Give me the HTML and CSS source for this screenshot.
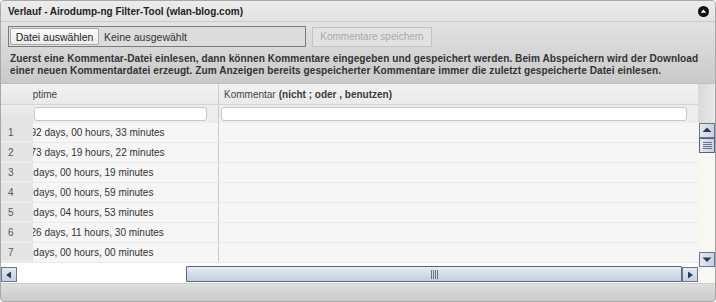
FILE: index.html
```html
<!DOCTYPE html>
<html lang="de">
<head>
<meta charset="utf-8">
<title>Verlauf</title>
<link rel="stylesheet" href="styles.css">
</head>
<body>
<div class="dialog">
  <div class="titlebar">
    <span class="title">Verlauf - Airodump-ng Filter-Tool (wlan-blog.com)</span>
    <svg class="collapse" width="11" height="11" viewBox="0 0 11 11"><circle cx="5.5" cy="5.5" r="5.5" fill="#111"/><path d="M2.6 6.8 L5.5 3.6 L8.4 6.8 Z" fill="#fff"/></svg>
  </div>
  <div class="content">
    <div class="toolbar">
      <div class="file">
        <span class="file-btn">Datei auswählen</span>
        <span class="file-name">Keine ausgewählt</span>
      </div>
      <span class="save-btn">Kommentare speichern</span>
    </div>
    <p class="desc">Zuerst eine Kommentar-Datei einlesen, dann können Kommentare eingegeben und gespeichert werden. Beim Abspeichern wird der Download einer neuen Kommentardatei erzeugt. Zum Anzeigen bereits gespeicherter Kommentare immer die zuletzt gespeicherte Datei einlesen.</p>
  </div>
  <div class="grid">
    <div class="grid-main">
      <div class="row hdr">
        <div class="c-num"></div>
        <div class="c-up"><span class="shift s-hdr">Uptime</span></div>
        <div class="c-kom">Kommentar <b>(nicht ; oder , benutzen)</b></div>
      </div>
      <div class="row filter">
        <div class="c-num"></div>
        <div class="c-up"><span class="inp inp-up"></span></div>
        <div class="c-kom"><span class="inp inp-kom"></span></div>
      </div>
      <div class="row data"><div class="c-num">1</div><div class="c-up"><span class="shift s1">192 days, 00 hours, 33 minutes</span></div><div class="c-kom"></div></div>
      <div class="row data"><div class="c-num">2</div><div class="c-up"><span class="shift s1">173 days, 19 hours, 22 minutes</span></div><div class="c-kom"></div></div>
      <div class="row data"><div class="c-num">3</div><div class="c-up"><span class="shift s0">0 days, 00 hours, 19 minutes</span></div><div class="c-kom"></div></div>
      <div class="row data"><div class="c-num">4</div><div class="c-up"><span class="shift s0">0 days, 00 hours, 59 minutes</span></div><div class="c-kom"></div></div>
      <div class="row data"><div class="c-num">5</div><div class="c-up"><span class="shift s0">0 days, 04 hours, 53 minutes</span></div><div class="c-kom"></div></div>
      <div class="row data"><div class="c-num">6</div><div class="c-up"><span class="shift s1">126 days, 11 hours, 30 minutes</span></div><div class="c-kom"></div></div>
      <div class="row data"><div class="c-num">7</div><div class="c-up"><span class="shift s0">0 days, 00 hours, 00 minutes</span></div><div class="c-kom"></div></div>
      <div class="hscroll">
        <span class="sbtn">
          <svg width="14" height="12" viewBox="0 0 14 12"><path d="M4 6 L9 2.5 L9 9.5 Z" fill="#2c3a5a"/></svg>
        </span>
        <span class="htrack"></span>
        <span class="hthumb"><span class="grip-v"></span></span>
        <span class="sbtn">
          <svg width="14" height="12" viewBox="0 0 14 12"><path d="M10 6 L5 2.5 L5 9.5 Z" fill="#2c3a5a"/></svg>
        </span>
      </div>
    </div>
    <div class="vscroll">
      <div class="vhead"></div>
      <div class="vtrack">
        <span class="vbtn">
          <svg width="14" height="13" viewBox="0 0 14 13"><path d="M7 3.5 L11.5 8 L2.5 8 Z" fill="#2c3a5a"/></svg>
        </span>
        <span class="vthumb"><span class="grip-h"></span></span>
        <span class="vspace"></span>
        <span class="vbtn">
          <svg width="14" height="13" viewBox="0 0 14 13"><path d="M7 9 L11.5 4.5 L2.5 4.5 Z" fill="#2c3a5a"/></svg>
        </span>
      </div>
    </div>
  </div>
  <div class="footer"></div>
</div>
</body>
</html>
```

FILE: styles.css
```css
* { box-sizing: border-box; }
html, body { margin: 0; padding: 0; background: #fff; }
body { font-family: "Liberation Sans", Arial, sans-serif; font-size: 10px; color: #333; }

.dialog {
  width: 716px;
  height: 302px;
  border: 1px solid #a8a8a8;
  border-radius: 4px;
  overflow: hidden;
  display: flex;
  flex-direction: column;
  background: #d2d2d2;
}

.titlebar {
  height: 21px;
  flex: none;
  display: flex;
  align-items: center;
  justify-content: space-between;
  padding: 0 6px 0 7px;
  background: linear-gradient(#ececec, #e2e2e2);
  border-bottom: 1px solid #cacaca;
}
.title { font-size: 10px; font-weight: bold; color: #222; }
.collapse { display: block; }

.content {
  flex: none;
  height: 61px;
  padding: 4px 0 0 7px;
  background: linear-gradient(#e3e3e3, #c9c9c9);
}
.toolbar { display: flex; align-items: center; gap: 6px; height: 21px; }
.file {
  width: 298px;
  height: 21px;
  border: 1px solid #7a7a7a;
  background: #dcdcdc;
  display: flex;
  align-items: center;
  padding-left: 1px;
  gap: 5px;
}
.file-btn {
  height: 17px;
  width: 89px;
  display: flex;
  align-items: center;
  justify-content: center;
  background: linear-gradient(#fbfbfb, #ececec);
  border: 1px solid #a9a9a9;
  border-radius: 2px;
  color: #222;
  font-size: 10.5px;
}
.file-name { color: #333; font-size: 10.5px; }
.save-btn {
  height: 20px;
  width: 120px;
  display: flex;
  align-items: center;
  justify-content: center;
  border: 1px solid #c3c3c3;
  background: #e2e2e2;
  color: #a9a9a9;
  font-size: 10px;
}
.desc {
  margin: 6px 0 0 2px;
  width: 698px;
  font-size: 10.1px;
  letter-spacing: 0.05px;
  line-height: 12px;
  font-weight: bold;
  color: #333;
}

.grid {
  flex: none;
  height: 200px;
  display: flex;
  border-top: 1px solid #c0c0c0;
  background: #fff;
}
.grid-main { width: 697px; display: flex; flex-direction: column; }
.row { display: flex; }
.c-num { width: 32px; flex: none; padding-left: 7px; color: #555; }
.c-up { width: 186px; flex: none; border-right: 1px solid #cdcdcd; overflow: hidden; white-space: nowrap; }
.c-kom { flex: 1; padding-left: 5px; }

.hdr { height: 21px; background: linear-gradient(#f2f2f2, #eaeaea); border-bottom: 1px solid #d6d6d6; align-items: stretch; }
.hdr > div { display: flex; align-items: center; }
.hdr .c-num { background: linear-gradient(#f0f0f0, #e6e6e6); }
.hdr .c-kom { color: #444; }
.hdr .c-kom b { margin-left: 3px; color: #3a3a3a; }

.filter { height: 18px; background: #ededed; align-items: stretch; }
.filter .c-num { background: linear-gradient(#ebebeb, #e2e2e2); }
.filter .c-up, .filter .c-kom { display: flex; align-items: center; }
.filter .c-up { padding-left: 1px; }
.filter .c-kom { padding-left: 2px; }
.inp {
  display: block;
  height: 14px;
  background: #fff;
  border: 1px solid #c7c7c7;
  border-radius: 3px;
}
.inp-up { width: 173px; }
.inp-kom { width: 466px; }

.data { height: 20px; background: #f6f6f6; border-bottom: 1px solid #e9e9e9; align-items: center; }
.data > div { height: 100%; display: flex; align-items: center; }
.data .c-num { background: #e4e4e4; border-bottom: 1px solid #ececec; }
.data .c-up { color: #333; }

.shift { display: inline-block; }
.s-hdr { margin-left: -7.6px; color: #444; }
.s1 { margin-left: -8px; }
.s0 { margin-left: -8px; }

.hscroll {
  flex: 1;
  display: flex;
  align-items: flex-end;
  padding-bottom: 1px;
  background: #fff;
}
.sbtn {
  width: 16px;
  height: 15px;
  flex: none;
  display: flex;
  align-items: center;
  justify-content: center;
  border: 1px solid #6a7590;
  background: linear-gradient(#e4e9f3, #c8d1e2);
}
.htrack { width: 169px; flex: none; }
.hthumb {
  flex: 1;
  height: 16px;
  border: 1px solid #56627f;
  border-radius: 1px;
  background: linear-gradient(#e6ebf3 0%, #d6dde9 50%, #c3cddd 100%);
  display: flex;
  align-items: center;
  justify-content: center;
}
.grip-v {
  width: 7px;
  height: 9px;
  background: repeating-linear-gradient(90deg, #6a7388 0 1px, transparent 1px 2px);
}

.vscroll { flex: 1; display: flex; flex-direction: column; }
.vhead { height: 39px; background: linear-gradient(90deg, #d9d9d9, #e8e8e8); }
.vtrack {
  flex: 1;
  background: #f8f7f1;
  display: flex;
  flex-direction: column;
  align-items: flex-start;
  padding-left: 1px;
  padding-bottom: 16px;
}
.vbtn {
  width: 16px;
  height: 15px;
  flex: none;
  display: flex;
  align-items: center;
  justify-content: center;
  border: 1px solid #6a7590;
  background: linear-gradient(90deg, #e4e9f3, #c8d1e2);
}
.vthumb {
  width: 16px;
  height: 15px;
  flex: none;
  border: 1px solid #56627f;
  background: linear-gradient(90deg, #e6ebf3, #c8d1e2);
  display: flex;
  align-items: center;
  justify-content: center;
}
.grip-h {
  width: 9px;
  height: 8px;
  background: repeating-linear-gradient(#6a7388 0 1px, transparent 1px 2px);
}
.vspace { flex: 1; }

.footer {
  flex: 1;
  background: linear-gradient(#dedede, #cacaca);
  border-top: 1px solid #cfcfcf;
}
```
